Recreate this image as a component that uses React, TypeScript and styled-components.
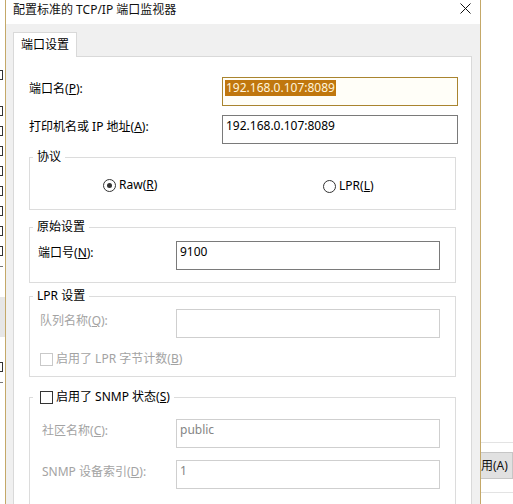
import React from 'react';
import styled, { createGlobalStyle } from 'styled-components';

const GlobalStyle = createGlobalStyle`
  html, body {
    margin: 0;
    padding: 0;
    background: #fff;
  }
  body {
    font-family: "Noto Sans", "Noto Sans CJK SC", sans-serif;
    font-size: 12px;
    color: #000;
  }
`;

const Desktop = styled.div`
  display: flex;
  width: 513px;
  height: 504px;
  overflow: hidden;
  background: #fff;
`;

/* the window behind, only a sliver of it shows on the left */
const BackEdge = styled.div`
  flex: none;
  width: 5px;
  display: flex;
  flex-direction: column;
  overflow: hidden;
  background: #fff;
`;

type MarkKind = 'box' | 'check' | 'band' | 'line';

const EdgeMark = styled.div<{ $gap: number; $kind: MarkKind }>`
  flex: none;
  margin-top: ${(p) => p.$gap}px;
  width: ${(p) => (p.$kind === 'band' ? '5px' : '3px')};
  height: ${(p) => (p.$kind === 'band' ? '40px' : p.$kind === 'line' ? '1px' : '10px')};
  box-sizing: border-box;
  background: ${(p) => (p.$kind === 'band' ? '#e6e6e6' : p.$kind === 'line' ? '#777' : 'transparent')};
  border: ${(p) => (p.$kind === 'box' || p.$kind === 'check' ? '1px solid #333' : 'none')};
  border-left: none;
`;

const Window = styled.div`
  flex: none;
  width: 476px;
  box-sizing: border-box;
  display: flex;
  flex-direction: column;
  border-left: 1px solid #c4a868;
  border-right: 1px solid #c4a868;
  background: #f0f0f0;
  overflow: hidden;
`;

const TitleBar = styled.div`
  flex: none;
  height: 24px;
  box-sizing: border-box;
  display: flex;
  justify-content: space-between;
  align-items: flex-start;
  padding: 2px 9px 0 7px;
  background: #fff;
`;

const Title = styled.span`
  line-height: 16px;
  color: #111;
`;

const CloseButton = styled.span`
  display: flex;
  margin-top: 1px;
`;

const Client = styled.div`
  flex: 1;
  min-height: 0;
  display: flex;
  flex-direction: column;
  padding: 8px 8px 0 7px;
`;

const TabStrip = styled.div`
  display: flex;
`;

const Tab = styled.div`
  position: relative;
  z-index: 1;
  height: 25px;
  box-sizing: border-box;
  margin-bottom: -1px;
  padding: 0 7px;
  line-height: 24px;
  background: #fff;
  border: 1px solid #d9d9d9;
  border-bottom: none;
`;

const TabPanel = styled.div`
  flex: none;
  box-sizing: border-box;
  width: 459px;
  padding: 20px 0 40px 15px;
  background: #fff;
  border: 1px solid #d9d9d9;
`;

const FormRow = styled.div<{ $mt?: number; $cols: string }>`
  display: grid;
  grid-template-columns: ${(p) => p.$cols};
  align-items: start;
  margin-top: ${(p) => p.$mt ?? 0}px;
`;

const Label = styled.span<{ $disabled?: boolean }>`
  padding-top: 4px;
  line-height: 16px;
  white-space: nowrap;
  color: ${(p) => (p.$disabled ? '#a3a3a3' : '#000')};
`;

const Field = styled.div<{ $state?: 'focus' | 'normal' | 'disabled' }>`
  height: 29px;
  box-sizing: border-box;
  padding: 2px 3px;
  line-height: 16px;
  white-space: nowrap;
  overflow: hidden;
  background: ${(p) => (p.$state === 'focus' ? '#fffef8' : '#fff')};
  color: ${(p) => (p.$state === 'disabled' ? '#858585' : '#000')};
  border: 1px solid
    ${(p) => (p.$state === 'focus' ? '#a9842f' : p.$state === 'disabled' ? '#cfcfcf' : '#7a7a7a')};
`;

const Selected = styled.span`
  display: inline-block;
  margin-left: -1px;
  padding: 0 1px;
  background: #c0770e;
  color: #fff4dc;
`;

const Group = styled.fieldset<{ $mt: number }>`
  width: 427px;
  box-sizing: border-box;
  margin: ${(p) => p.$mt}px 0 0;
  padding: 0;
  min-inline-size: 0;
  border: 1px solid #dcdcdc;
`;

const Legend = styled.legend<{ $pl?: number }>`
  display: flex;
  align-items: center;
  gap: 3px;
  margin-left: 3px;
  padding: 0 4px 0 ${(p) => p.$pl ?? 4}px;
  line-height: 14px;
  color: #000;
`;

const GroupBody = styled.div<{ $pad: string }>`
  padding: ${(p) => p.$pad};
`;

const RadioRow = styled.div`
  display: grid;
  grid-template-columns: 220px auto;
  align-items: center;
`;

const RadioOption = styled.label<{ $shift?: number }>`
  display: flex;
  align-items: center;
  gap: 3px;
  margin-top: ${(p) => p.$shift ?? 0}px;
  line-height: 14px;
`;

const RadioDot = styled.span<{ $checked?: boolean }>`
  display: inline-flex;
  align-items: center;
  justify-content: center;
  width: 13px;
  height: 13px;
  box-sizing: border-box;
  border: 1px solid #333;
  border-radius: 50%;
  background: #fff;

  &::after {
    content: '';
    width: 5px;
    height: 5px;
    border-radius: 50%;
    background: ${(p) => (p.$checked ? '#333' : 'transparent')};
  }
`;

const CheckRow = styled.label<{ $mt?: number; $disabled?: boolean }>`
  display: flex;
  align-items: center;
  gap: 3px;
  margin-top: ${(p) => p.$mt ?? 0}px;
  line-height: 14px;
  color: ${(p) => (p.$disabled ? '#a3a3a3' : '#000')};
`;

const CheckBox = styled.span<{ $disabled?: boolean }>`
  flex: none;
  width: 13px;
  height: 13px;
  box-sizing: border-box;
  border: 1px solid ${(p) => (p.$disabled ? '#c9c9c9' : '#333')};
  background: #fff;
`;

/* the owner dialog peeks out on the right */
const RightEdge = styled.div`
  flex: 1;
  display: flex;
  flex-direction: column;
  overflow: hidden;
  background: #fff;
`;

const Rule = styled.div<{ $mt: number }>`
  flex: none;
  height: 1px;
  margin-top: ${(p) => p.$mt}px;
  background: #e3e3e3;
`;

const ApplyButton = styled.div`
  flex: none;
  height: 27px;
  box-sizing: border-box;
  margin-top: 9px;
  padding-left: 0;
  line-height: 25px;
  white-space: nowrap;
  overflow: hidden;
  background: #e1e1e1;
  border: 1px solid #c6c6c6;
  border-left: none;
  color: #111;
`;

const Key = ({ k }: { k: string }) => (
  <>
    (<u>{k}</u>)
  </>
);

const edgeMarks: { gap: number; kind: MarkKind }[] = [
  { gap: 70, kind: 'box' },
  { gap: 26, kind: 'box' },
  { gap: 10, kind: 'box' },
  { gap: 10, kind: 'box' },
  { gap: 10, kind: 'box' },
  { gap: 10, kind: 'box' },
  { gap: 10, kind: 'box' },
  { gap: 10, kind: 'check' },
  { gap: 10, kind: 'box' },
  { gap: 10, kind: 'line' },
  { gap: 30, kind: 'band' },
  { gap: 25, kind: 'check' },
  { gap: 10, kind: 'line' },
];

export default function App() {
  return (
    <>
      <GlobalStyle />
      <Desktop>
        <BackEdge>
          {edgeMarks.map((m, i) => (
            <EdgeMark key={i} $gap={m.gap} $kind={m.kind} />
          ))}
        </BackEdge>

        <Window>
          <TitleBar>
            <Title>配置标准的 TCP/IP 端口监视器</Title>
            <CloseButton>
              <svg width="11" height="11" viewBox="0 0 11 11">
                <path d="M0.5 0.5 L10.5 10.5 M10.5 0.5 L0.5 10.5" stroke="#111" strokeWidth="1" fill="none" />
              </svg>
            </CloseButton>
          </TitleBar>

          <Client>
            <TabStrip>
              <Tab>端口设置</Tab>
            </TabStrip>
            <TabPanel>
              <FormRow $cols="193px 236px">
                <Label>
                  端口名<Key k="P" />:
                </Label>
                <Field $state="focus">
                  <Selected>192.168.0.107:8089</Selected>
                </Field>
              </FormRow>
              <FormRow $cols="193px 236px" $mt={9}>
                <Label>
                  打印机名或 IP 地址<Key k="A" />:
                </Label>
                <Field>192.168.0.107:8089</Field>
              </FormRow>

              <Group $mt={6}>
                <Legend>协议</Legend>
                <GroupBody $pad="13px 0 16px 73px">
                  <RadioRow>
                    <RadioOption>
                      <RadioDot $checked />
                      <span>
                        Raw<Key k="R" />
                      </span>
                    </RadioOption>
                    <RadioOption $shift={2}>
                      <RadioDot />
                      <span>
                        LPR<Key k="L" />
                      </span>
                    </RadioOption>
                  </RadioRow>
                </GroupBody>
              </Group>

              <Group $mt={10}>
                <Legend>原始设置</Legend>
                <GroupBody $pad="7px 0 12px 8px">
                  <FormRow $cols="138px 264px">
                    <Label>
                      端口号<Key k="N" />:
                    </Label>
                    <Field>9100</Field>
                  </FormRow>
                </GroupBody>
              </Group>

              <Group $mt={6}>
                <Legend>LPR 设置</Legend>
                <GroupBody $pad="6px 0 10px 10px">
                  <FormRow $cols="136px 264px">
                    <Label $disabled>
                      队列名称<Key k="Q" />:
                    </Label>
                    <Field $state="disabled" />
                  </FormRow>
                  <CheckRow $mt={14} $disabled>
                    <CheckBox $disabled />
                    <span>
                      启用了 LPR 字节计数<Key k="B" />
                    </span>
                  </CheckRow>
                </GroupBody>
              </Group>

              <Group $mt={13}>
                <Legend $pl={7}>
                  <CheckBox />
                  <span>
                    启用了 SNMP 状态<Key k="S" />
                  </span>
                </Legend>
                <GroupBody $pad="15px 0 20px 12px">
                  <FormRow $cols="134px 264px">
                    <Label $disabled>
                      社区名称<Key k="C" />:
                    </Label>
                    <Field $state="disabled">public</Field>
                  </FormRow>
                  <FormRow $cols="134px 264px" $mt={12}>
                    <Label $disabled>
                      SNMP 设备索引<Key k="D" />:
                    </Label>
                    <Field $state="disabled">1</Field>
                  </FormRow>
                </GroupBody>
              </Group>
            </TabPanel>
          </Client>
        </Window>

        <RightEdge>
          <Rule $mt={442} />
          <ApplyButton>用(A)</ApplyButton>
          <Rule $mt={13} />
        </RightEdge>
      </Desktop>
    </>
  );
}
